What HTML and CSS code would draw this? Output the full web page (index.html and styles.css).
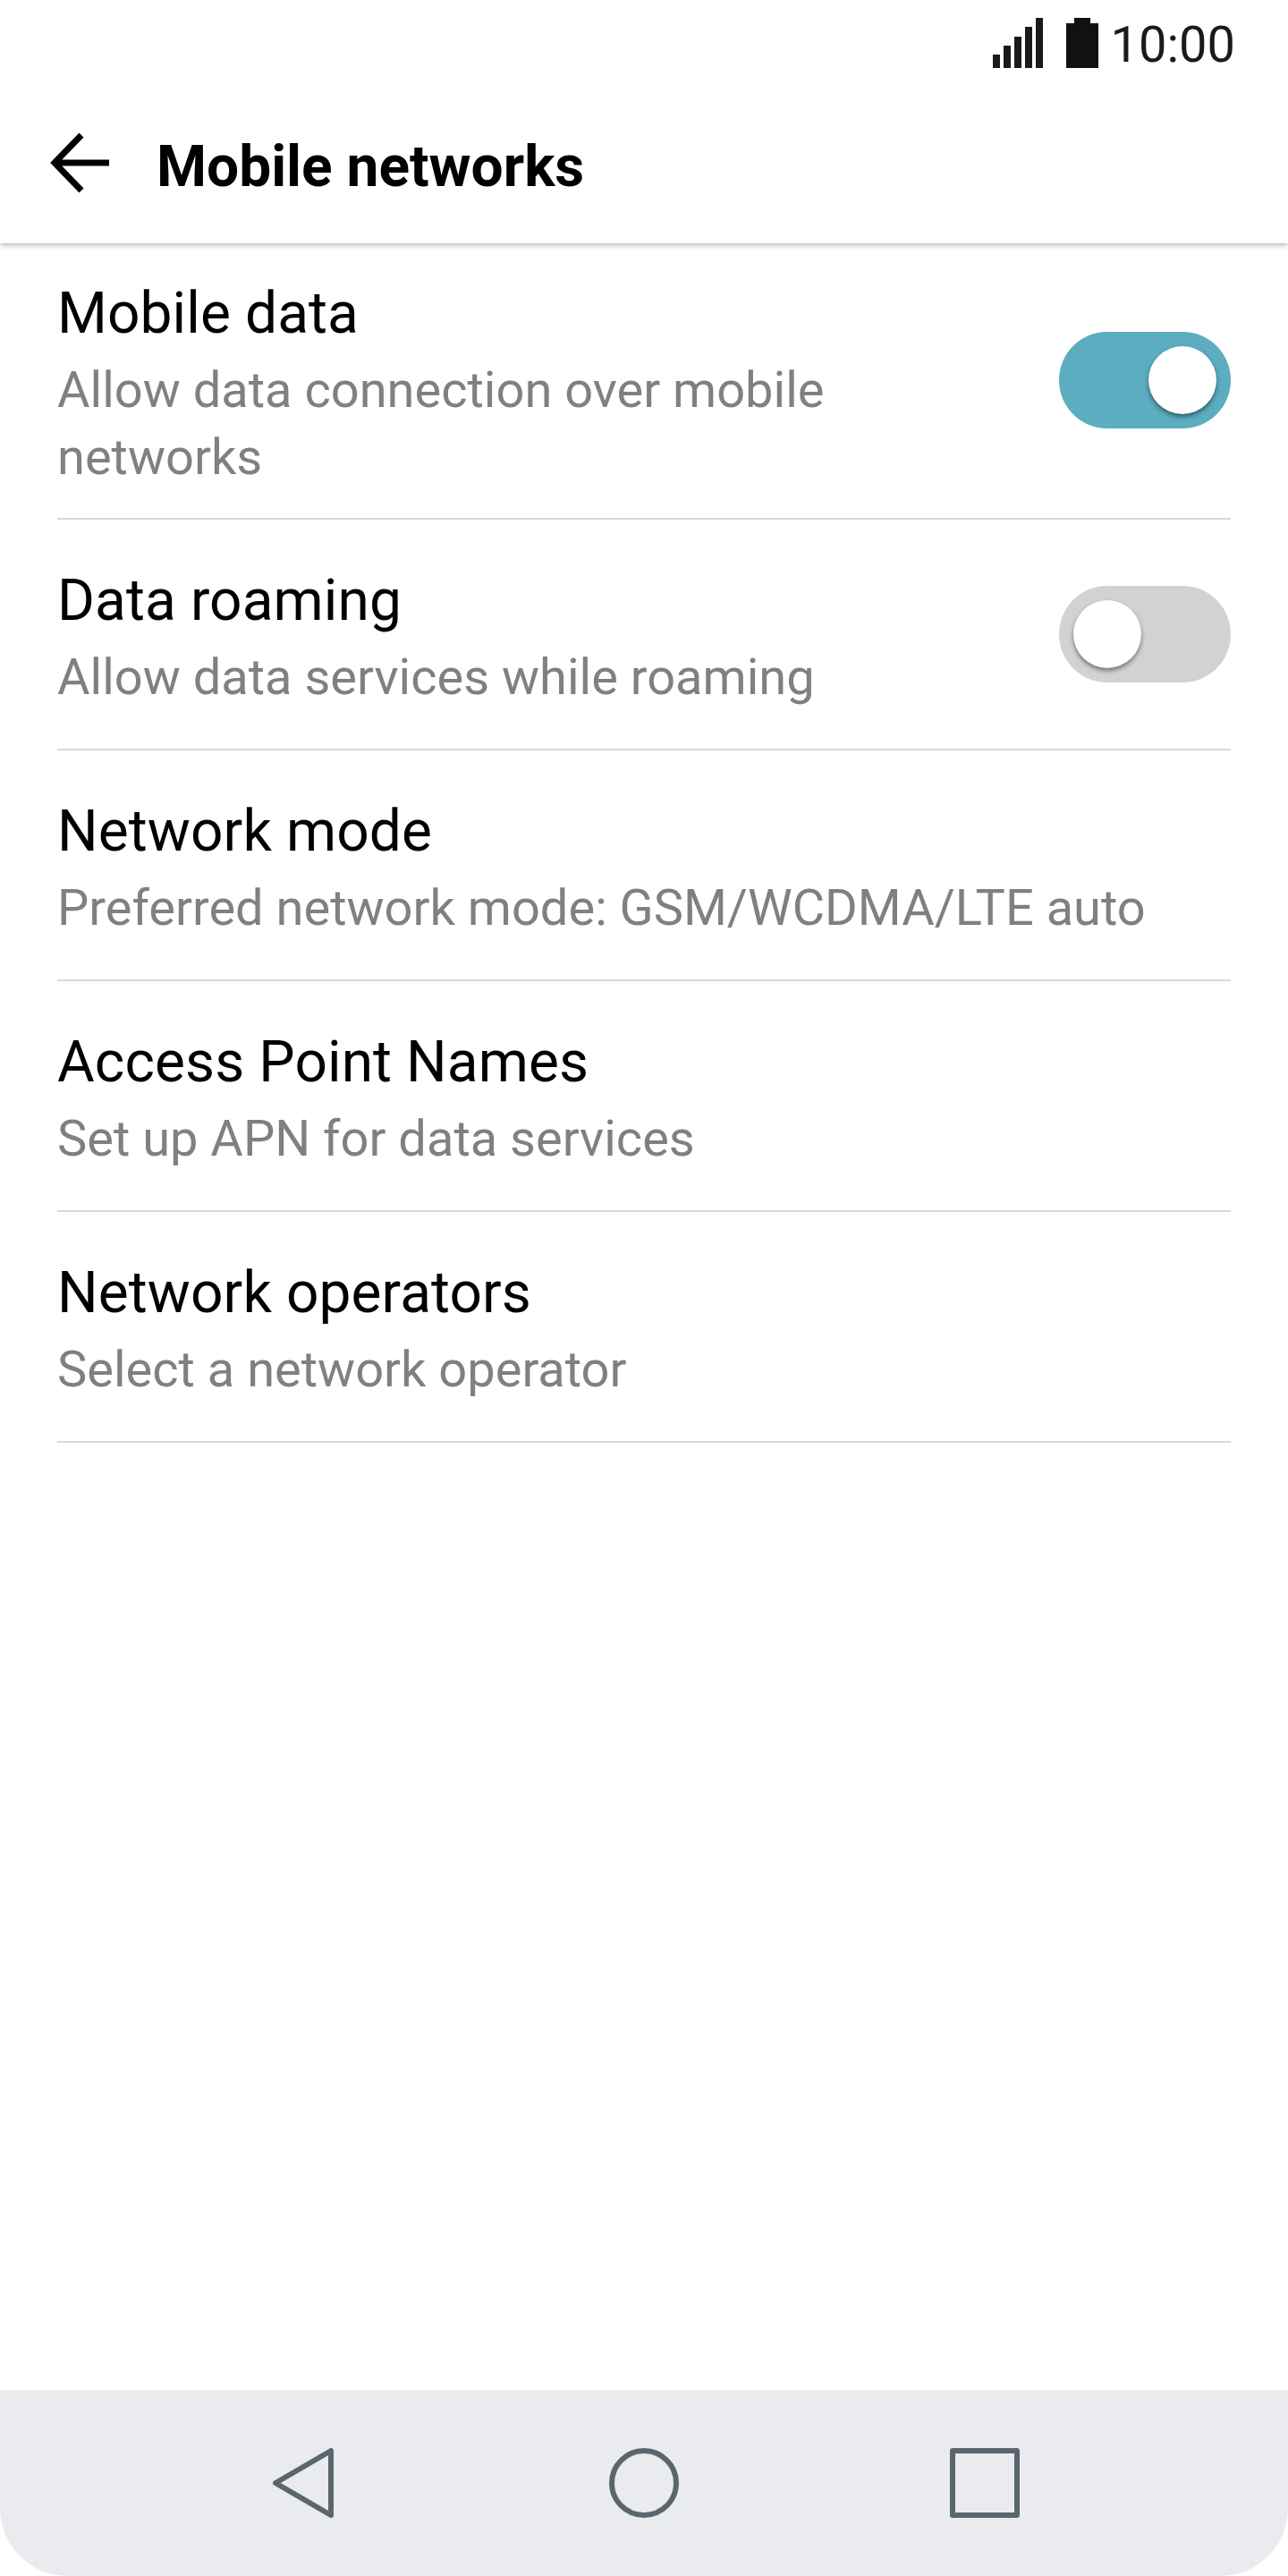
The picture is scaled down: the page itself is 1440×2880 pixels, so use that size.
FILE: index.html
```html
<!DOCTYPE html>
<html lang="en">
<head>
<meta charset="utf-8">
<title>Mobile networks</title>
<link rel="stylesheet" href="styles.css">
</head>
<body>
<div class="screen">
  <header class="top">
    <div class="status">
      <svg class="signal" width="56" height="56" viewBox="0 0 56 56"><path fill="#1a1a1a" d="M0 41h8v15H0zM12 31h8v25h-8zM24 21h8v35h-8zM36 10h8v46h-8zM48 0h8v56h-8z"/></svg>
      <svg class="battery" width="36" height="56" viewBox="0 0 36 56"><path fill="#111" d="M9 0h18v6h9v50H0V6h9z"/></svg>
      <span class="clock">10:00</span>
    </div>
    <div class="appbar">
      <svg class="back" width="68" height="68" viewBox="0 0 68 68"><path fill="none" stroke="#000" stroke-width="7" d="M66 34H6M35 3 5 34l30 31"/></svg>
      <h1 class="title">Mobile networks</h1>
    </div>
  </header>
  <main class="list">
    <div class="row row-first">
      <div class="text">
        <div class="name">Mobile data</div>
        <div class="desc">Allow data connection over mobile<br>networks</div>
      </div>
      <div class="switch on"><span class="knob"></span></div>
    </div>
    <div class="row">
      <div class="text">
        <div class="name">Data roaming</div>
        <div class="desc">Allow data services while roaming</div>
      </div>
      <div class="switch"><span class="knob"></span></div>
    </div>
    <div class="row">
      <div class="text">
        <div class="name">Network mode</div>
        <div class="desc">Preferred network mode: GSM/WCDMA/LTE auto</div>
      </div>
    </div>
    <div class="row">
      <div class="text">
        <div class="name">Access Point Names</div>
        <div class="desc">Set up APN for data services</div>
      </div>
    </div>
    <div class="row">
      <div class="text">
        <div class="name">Network operators</div>
        <div class="desc">Select a network operator</div>
      </div>
    </div>
  </main>
  <nav class="nav">
    <svg class="nav-back" width="78" height="78" viewBox="0 0 78 78"><path fill="none" stroke="#5a666e" stroke-width="6" stroke-linejoin="round" d="M66 3v72L4 39z"/></svg>
    <svg class="nav-home" width="78" height="78" viewBox="0 0 78 78"><circle cx="39" cy="39" r="36" fill="none" stroke="#5a666e" stroke-width="6"/></svg>
    <svg class="nav-recent" width="78" height="78" viewBox="0 0 78 78"><rect x="3" y="3" width="72" height="72" fill="none" stroke="#5a666e" stroke-width="6" stroke-linejoin="round"/></svg>
  </nav>
</div>
</body>
</html>
```
FILE: styles.css
```css
* { box-sizing: border-box; }
html, body { margin: 0; padding: 0; background: #fff; }
.screen {
  width: 1440px;
  height: 2880px;
  display: flex;
  flex-direction: column;
  overflow: hidden;
  background: #fff;
  font-family: Roboto, "Liberation Sans", sans-serif;
}
.top {
  height: 272px;
  flex: none;
  background: #fff;
  box-shadow: 0 2px 6px rgba(0, 0, 0, 0.3);
  position: relative;
  z-index: 1;
}
.status {
  height: 90px;
  display: flex;
  align-items: flex-start;
  padding: 20px 59px 0 0;
  justify-content: flex-end;
}
.signal { margin-right: 26px; }
.battery { margin-right: 14px; }
.clock {
  font-size: 56px;
  line-height: 60px;
  color: #1a1a1a;
}
.appbar {
  display: flex;
  align-items: flex-start;
  padding: 58px 0 0 56px;
}
.back { flex: none; margin-right: 51px; }
.title {
  margin: 6px 0 0;
  font-weight: 700;
  font-size: 64px;
  line-height: 66px;
  color: #000;
}
.list {
  flex: 1;
  padding: 0 64px;
  background: #fff;
}
.row {
  height: 258px;
  border-bottom: 2px solid #d8d8d8;
  display: flex;
  align-items: center;
  justify-content: space-between;
}
.row-first { height: 309px; }
.row-first .switch { margin-bottom: 1px; }
.name {
  font-size: 64px;
  line-height: 96px;
  letter-spacing: 0.1px;
  color: #000;
}
.desc {
  font-size: 56px;
  line-height: 75px;
  color: #808080;
}
.switch {
  flex: none;
  width: 192px;
  height: 108px;
  border-radius: 54px;
  background: #d2d2d2;
  padding: 16px;
  display: flex;
}
.switch.on {
  background: #5badbf;
  justify-content: flex-end;
}
.knob {
  width: 76px;
  height: 76px;
  border-radius: 50%;
  background: #fff;
  box-shadow: 0 3px 5px rgba(0, 0, 0, 0.45);
}
.nav {
  height: 208px;
  flex: none;
  background: #e9ebef;
  border-radius: 0 0 76px 76px;
  display: flex;
  align-items: center;
  padding-left: 304px;
}
.nav-home { margin-left: 299px; }
.nav-recent { margin-left: 303px; }
```
